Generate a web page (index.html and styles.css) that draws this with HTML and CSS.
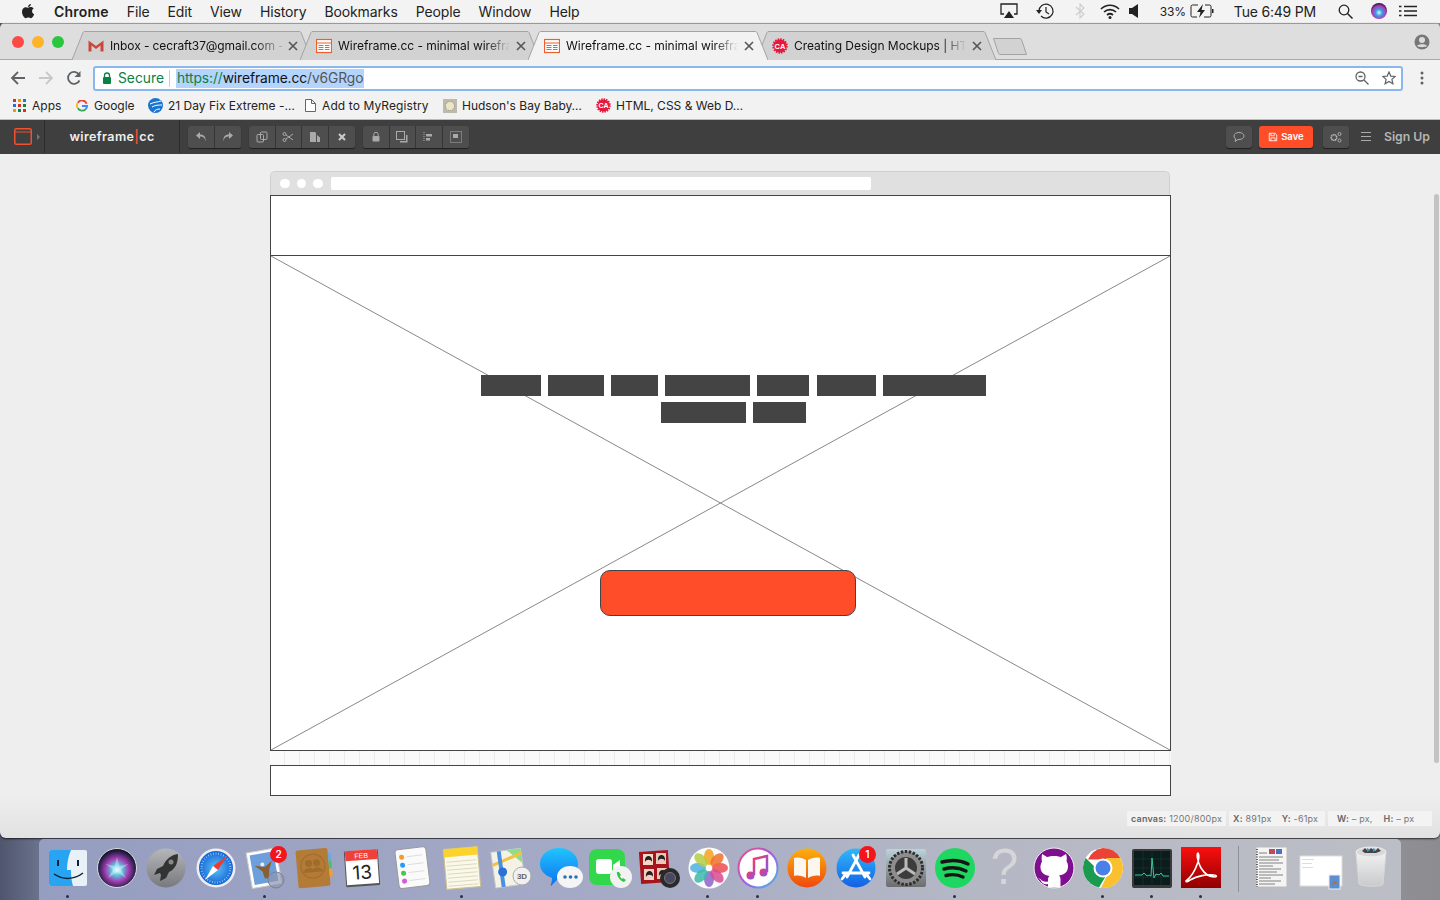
FILE: index.html
```html
<!DOCTYPE html>
<html lang="en">

<head>
    <meta charset="UTF-8">
    <title>Wireframe.cc - minimal wireframing tool</title>
    <link rel="stylesheet" href="styles.css">
</head>

<body>
    <!-- macOS menu bar -->
    <header class="menubar">
        <svg class="apple" viewBox="0 0 14 16"><path d="M10 1c0 1.500-1.300 3-2.900 3C7 2.400 8.400 1 10 1zM7.100 4.700c.7 0 1.500-.6 2.700-.6 1.100 0 2.200.5 2.900 1.500-2.400 1.400-2 4.700.5 5.700-.6 1.600-1.900 3.900-3.200 3.900-1 0-1.400-.6-2.600-.6s-1.700.6-2.600.6C3 14.900 1 11.600 1 8.800c0-2.900 1.900-4.500 3.700-4.500 1 0 1.800.4 2.400.4z" fill="#222"/></svg>
        <nav class="menu">
            <b>Chrome</b><span>File</span><span>Edit</span><span>View</span><span>History</span><span>Bookmarks</span><span>People</span><span>Window</span><span>Help</span>
        </nav>
        <div class="status">
            <svg class="st-airplay" viewBox="0 0 18 16"><path d="M4 11H1V1h16v10h-3" fill="none" stroke="#222" stroke-width="1.300"/><path d="M9 8l5 7H4z" fill="#222"/></svg>
            <svg class="st-history" viewBox="0 0 20 18"><path d="M4 9a7 7 0 1 1 2 5" fill="none" stroke="#222" stroke-width="1.200"/><path d="M1 8h6L4 12z" fill="#222"/><path d="M11 5v5l3 2" fill="none" stroke="#222" stroke-width="1.200"/></svg>
            <svg class="st-bluetooth" viewBox="0 0 10 16"><path d="M1 4l8 7-4 4V1l4 4-8 7" fill="none" stroke="#ccc" stroke-width="1.100"/></svg>
            <svg class="st-wifi" viewBox="0 0 20 15"><path d="M1 5c5-5 13-5 18 0M4 8c3.500-3.300 8.500-3.300 12 0M7 11c1.800-1.500 4.200-1.500 6 0" fill="none" stroke="#222" stroke-width="1.700"/><circle cx="10" cy="13.500" r="1.500" fill="#222"/></svg>
            <svg class="st-volume" viewBox="0 0 10 14"><path d="M0 4h3l6-4v14l-6-4H0z" fill="#222"/></svg>
            <span class="st-percent">33%</span>
            <svg class="st-battery" viewBox="0 0 24 14"><path d="M8 1H2.500A1.500 1.500 0 0 0 1 2.500v9A1.500 1.500 0 0 0 2.500 13H7M15 1h4.500A1.500 1.500 0 0 1 21 2.500v9a1.500 1.500 0 0 1-1.500 1.500H14" fill="none" stroke="#222"/><path d="M13 0L7 8h3.500L9 14l6-8h-3.500z" fill="#222"/><rect x="22" y="5" width="1.500" height="4" fill="#222"/></svg>
            <span class="st-clock">Tue 6:49 PM</span>
            <svg class="st-search" viewBox="0 0 15 15"><circle cx="6" cy="6" r="4.800" fill="none" stroke="#222" stroke-width="1.300"/><path d="M9.500 9.500l5 5" stroke="#222" stroke-width="1.500"/></svg>
            <svg class="st-siri" viewBox="0 0 16 16"><defs><radialGradient id="miniSiri" cx=".5" cy=".6" r=".6"><stop offset="0" stop-color="#cfe"/><stop offset=".35" stop-color="#3a9be8"/><stop offset=".7" stop-color="#b03ab8"/><stop offset="1" stop-color="#151528"/></radialGradient></defs><circle cx="8" cy="8" r="8" fill="url(#miniSiri)"/></svg>
            <svg class="st-list" viewBox="0 0 18 12"><path d="M5 1.500h13M5 6h13M5 10.500h13" stroke="#222" stroke-width="1.400"/><path d="M0 1.500h2.500M0 6h2.500M0 10.500h2.500" stroke="#222" stroke-width="1.600"/></svg>
        </div>
    </header>

    <div class="window">
        <!-- tabs -->
        <div class="tabstrip">
            <div class="lights"><i class="light-red"></i><i class="light-yellow"></i><i class="light-green"></i></div>

            <div class="tab">
                <svg class="tab-shape" viewBox="0 0 240 29" preserveAspectRatio="none"><path d="M0 29L11 1.500Q11.500 .5 13 .5H227Q228.500 .5 229 1.500L240 29"/></svg>
                <svg class="favicon" viewBox="0 0 16 16"><path d="M.5 2.500v11h3V7.500L8 11l4.500-3.500v6h3v-11L8 8z" fill="#c9483a"/></svg>
                <span class="tab-title tab-title-full">Inbox - cecraft37@gmail.com -</span>
                <svg class="tab-close" viewBox="0 0 10 10"><path d="M1 1l8 8M9 1l-8 8"/></svg>
            </div>

            <div class="tab">
                <svg class="tab-shape" viewBox="0 0 240 29" preserveAspectRatio="none"><path d="M0 29L11 1.500Q11.500 .5 13 .5H227Q228.500 .5 229 1.500L240 29"/></svg>
                <svg class="favicon" viewBox="0 0 16 16"><rect x=".5" y="1.500" width="15" height="13" fill="#fff" stroke="#ec5f2f" stroke-width="1.200"/><path d="M.5 5h15M2.500 7.500h5M2.500 9.500h5M2.500 11.500h5M9 7.500h4.500M9 9.500h4.500M9 11.500h4.500" stroke="#ec5f2f"/></svg>
                <span class="tab-title">Wireframe.cc - minimal wirefra</span>
                <svg class="tab-close" viewBox="0 0 10 10"><path d="M1 1l8 8M9 1l-8 8"/></svg>
            </div>

            <div class="tab tab-active">
                <svg class="tab-shape" viewBox="0 0 240 29" preserveAspectRatio="none"><path d="M0 29L11 1.500Q11.500 .5 13 .5H227Q228.500 .5 229 1.500L240 29"/></svg>
                <svg class="favicon" viewBox="0 0 16 16"><rect x=".5" y="1.500" width="15" height="13" fill="#fff" stroke="#ec5f2f" stroke-width="1.200"/><path d="M.5 5h15M2.500 7.500h5M2.500 9.500h5M2.500 11.500h5M9 7.500h4.500M9 9.500h4.500M9 11.500h4.500" stroke="#ec5f2f"/></svg>
                <span class="tab-title">Wireframe.cc - minimal wirefra</span>
                <svg class="tab-close" viewBox="0 0 10 10"><path d="M1 1l8 8M9 1l-8 8"/></svg>
            </div>

            <div class="tab">
                <svg class="tab-shape" viewBox="0 0 240 29" preserveAspectRatio="none"><path d="M0 29L11 1.500Q11.500 .5 13 .5H227Q228.500 .5 229 1.500L240 29"/></svg>
                <svg class="favicon" viewBox="0 0 16 16"><circle cx="8" cy="8" r="6.500" fill="#e8173c" stroke="#e8173c" stroke-width="2.500" stroke-dasharray="1.500 1"/><text x="8" y="10.800" class="ca-text">CA</text></svg>
                <span class="tab-title">Creating Design Mockups | HT</span>
                <svg class="tab-close" viewBox="0 0 10 10"><path d="M1 1l8 8M9 1l-8 8"/></svg>
            </div>

            <svg class="new-tab" viewBox="0 0 34 17"><path d="M.5 .5H27Q28 .5 28.500 1.500L33.500 16.500H7Q6 16.500 5.500 15.500z"/></svg>
            <svg class="profile" viewBox="0 0 16 16"><circle cx="8" cy="8" r="7.500" fill="#777"/><circle cx="8" cy="6" r="3" fill="#dcdcdc"/><path d="M3 12c1-2.500 9-2.500 10 0-1.500 1.500-8.500 1.500-10 0z" fill="#dcdcdc"/></svg>
        </div>

        <!-- address bar -->
        <div class="toolbar">
            <svg class="nav-icon" viewBox="0 0 16 16"><path d="M15 8H2M8 2L2 8l6 6" fill="none" stroke="#5f6368" stroke-width="1.800"/></svg>
            <svg class="nav-icon" viewBox="0 0 16 16"><path d="M1 8h13M8 2l6 6-6 6" fill="none" stroke="#c8c8c8" stroke-width="1.800"/></svg>
            <svg class="nav-icon" viewBox="0 0 16 16"><path d="M13.500 10.500A6 6 0 1 1 13 4.500" fill="none" stroke="#5f6368" stroke-width="1.800"/><path d="M14.500 1v6h-6z" fill="#5f6368"/></svg>
            <div class="omnibox">
                <svg class="lock" viewBox="0 0 10 12"><path d="M2.500 5.500V3.500a2.500 2.500 0 0 1 5 0v2" fill="none" stroke="#0b8043" stroke-width="1.300"/><rect x="1" y="5" width="8" height="7" rx="1" fill="#0b8043"/></svg>
                <span class="secure">Secure</span>
                <span class="url"><span class="url-scheme">https://</span>wireframe.cc<span class="url-path">/v6GRgo</span></span>
                <svg class="omni-zoom" viewBox="0 0 14 14"><circle cx="5.500" cy="5.500" r="4.500" fill="none" stroke="#5f6368" stroke-width="1.300"/><path d="M9 9l4.500 4.500M3.500 5.500h4" stroke="#5f6368" stroke-width="1.300"/></svg>
                <svg class="omni-star" viewBox="0 0 14 14"><path d="M7 1l1.800 4.100 4.400.4-3.300 2.900 1 4.400L7 10.500 3.100 12.800l1-4.400L.8 5.500l4.400-.4z" fill="none" stroke="#5f6368" stroke-width="1.200"/></svg>
            </div>
            <svg class="dots" viewBox="0 0 4 14"><circle cx="2" cy="2" r="1.500"/><circle cx="2" cy="7" r="1.500"/><circle cx="2" cy="12" r="1.500"/></svg>
        </div>

        <!-- bookmarks -->
        <div class="bookmarks">
            <a class="bm bm-apps"><svg viewBox="0 0 13 13"><path fill="#d93025" d="M0 0h3v3H0z"/><path fill="#f29900" d="M5 0h3v3H5z"/><path fill="#1a73e8" d="M10 0h3v3h-3z"/><path fill="#1a73e8" d="M0 5h3v3H0z"/><path fill="#d93025" d="M5 5h3v3H5z"/><path fill="#188038" d="M10 5h3v3h-3z"/><path fill="#f29900" d="M0 10h3v3H0z"/><path fill="#188038" d="M5 10h3v3H5z"/><path fill="#d93025" d="M10 10h3v3h-3z"/></svg>Apps</a>
            <a class="bm bm-google"><svg viewBox="0 0 13 13"><path d="M11.500 4A5.300 5.300 0 0 0 2 3" fill="none" stroke="#ea4335" stroke-width="2"/><path d="M2 3a5.300 5.300 0 0 0 0 6" fill="none" stroke="#fbbc05" stroke-width="2"/><path d="M2 9a5.300 5.300 0 0 0 8.500.8" fill="none" stroke="#34a853" stroke-width="2"/><path d="M10.500 9.800c1-1 1.500-2 1.500-3.300H6.500" fill="none" stroke="#4285f4" stroke-width="2"/></svg>Google</a>
            <a class="bm bm-fix"><svg viewBox="0 0 15 15"><circle cx="7.500" cy="7.500" r="7.500" fill="#1b75d0"/><path d="M2 6c4-2 8-2 11-3M4 9c3-2 7-2 10-2M6 14c1-2 3-3 6-3" fill="none" stroke="#fff"/></svg>21 Day Fix Extreme -…</a>
            <a class="bm bm-registry"><svg viewBox="0 0 11 13"><path d="M.5 .5h6l4 4v8H.5zM6.500 .5v4h4" fill="#fff" stroke="#666"/></svg>Add to MyRegistry</a>
            <a class="bm bm-hudson"><svg viewBox="0 0 14 14"><rect width="14" height="14" fill="#bdb9ad"/><circle cx="7" cy="7" r="4.500" fill="#ece6c6" stroke="#8d8a80" stroke-dasharray="1 1"/></svg>Hudson's Bay Baby…</a>
            <a class="bm bm-html"><svg viewBox="0 0 16 16"><circle cx="8" cy="8" r="6.500" fill="#e8173c" stroke="#e8173c" stroke-width="2.500" stroke-dasharray="1.500 1"/><text x="8" y="10.800" class="ca-text">CA</text></svg>HTML, CSS &amp; Web D…</a>
        </div>

        <!-- wireframe.cc app bar -->
        <div class="appbar">
            <div class="app-stencil">
                <svg viewBox="0 0 18 17"><rect x=".75" y=".75" width="16.500" height="15.500" rx="1.500" fill="none" stroke="#f0512e" stroke-width="1.500"/><path d="M1 4h16" stroke="#f0512e"/></svg>
                <i class="caret"></i>
            </div>
            <div class="app-logo">wireframe<em>|</em>cc</div>
            <div class="btn-group">
                <button class="tool"><svg viewBox="0 0 12 12"><path d="M5 1L1 4.500 5 8V5.500c3 0 5 1 5.500 5 .5-4.500-1.500-7-5.500-7z"/></svg></button>
                <button class="tool"><svg viewBox="0 0 12 12"><path d="M7 1l4 3.500L7 8V5.500c-3 0-5 1-5.500 5C1 6 3 3.500 7 3.500z"/></svg></button>
            </div>
            <div class="btn-group">
                <button class="tool"><svg viewBox="0 0 12 12"><rect x="1" y="3.500" width="6.500" height="7.500" rx="1" class="hollow"/><rect x="4.500" y="1" width="6.500" height="7.500" rx="1" class="hollow"/></svg></button>
                <button class="tool"><svg viewBox="0 0 12 12"><circle cx="2.500" cy="3" r="1.500" class="hollow"/><circle cx="2.500" cy="9" r="1.500" class="hollow"/><path d="M4 4l7 5M4 8l7-5" class="hollow"/></svg></button>
                <button class="tool"><svg viewBox="0 0 12 12"><path d="M1 1h5l1 1v9H1z"/><path d="M8 4l3 2.500V11H8z"/></svg></button>
                <button class="tool"><svg viewBox="0 0 12 12"><path d="M3 3l6 6M9 3l-6 6" class="thick"/></svg></button>
            </div>
            <div class="btn-group">
                <button class="tool"><svg viewBox="0 0 12 12"><path d="M3.800 5V3.500a2.200 2.200 0 0 1 4.400 0V5" class="hollow"/><rect x="2.500" y="5" width="7" height="5.500" rx="1"/></svg></button>
                <button class="tool"><svg viewBox="0 0 12 12"><rect x=".5" y=".5" width="8" height="8" class="hollow"/><path d="M10 4h1.500v7.500H4V10h6z"/></svg></button>
                <button class="tool"><svg viewBox="0 0 12 12"><path d="M1 1v10" class="hollow" stroke-dasharray="1 1"/><path d="M3 3h6v2.500H3zM3 7h4v2.500H3z"/></svg></button>
                <button class="tool"><svg viewBox="0 0 12 12"><rect x=".5" y=".5" width="11" height="11" class="hollow" stroke-dasharray="1 1"/><rect x="3" y="3" width="5" height="4"/></svg></button>
            </div>
            <div class="app-right">
                <button class="tool tool-single"><svg viewBox="0 0 12 12"><path d="M6 1.500c3 0 5 1.500 5 3.500s-2 3.500-5 3.500l-1 0-3 2 .8-2.600C1.700 7.800 1 6.500 1 5c0-2 2-3.500 5-3.500z" class="hollow"/></svg></button>
                <button class="save"><svg viewBox="0 0 12 12"><path d="M1.500 1.500h7l2 2v7h-9zM3.500 1.500v3h4v-3M3.500 10.500V7h5v3.500" fill="none" stroke="#fff"/></svg>Save</button>
                <button class="tool tool-single"><svg viewBox="0 0 12 12"><circle cx="4" cy="6.500" r="2.800" fill="none" stroke="#bbb" stroke-width="1.600" stroke-dasharray="1.400 .5"/><circle cx="9.500" cy="3" r="1.500" class="hollow"/><circle cx="9.500" cy="9.500" r="1.500" class="hollow"/></svg></button>
                <svg class="app-burger" viewBox="0 0 10 9"><path d="M0 .5h10M0 4.500h10M0 8.500h10" stroke="#aaa"/></svg>
                <a class="signup">Sign Up</a>
            </div>
        </div>

        <!-- drawing area -->
        <main class="canvas">
            <div class="stage">
                <div class="mock-bar">
                    <i></i><i></i><i></i>
                    <span class="mock-url"></span>
                </div>
                <div class="wf-box wf-header"></div>
                <div class="wf-box wf-hero">
                    <svg class="wf-cross" viewBox="0 0 899 494" preserveAspectRatio="none"><path d="M0 0L899 494M899 0L0 494"/></svg>
                    <div class="wf-text">
                        <span style="width:60px"></span><span style="width:56px"></span><span style="width:47px"></span><span style="width:85px"></span><span style="width:52px"></span><span style="width:59px"></span><span style="width:103px"></span><span style="width:85px"></span><span style="width:53px"></span>
                    </div>
                    <div class="wf-button"></div>
                </div>
                <div class="wf-grid"></div>
                <div class="wf-box wf-footer"></div>
            </div>
            <div class="scrollbar"></div>
            <div class="readout">
                <span class="chip chip-canvas"><b>canvas:</b> 1200/800px</span>
                <span class="chip chip-xy"><b>X:</b> 891px &nbsp; <b>Y:</b> -61px</span>
                <span class="chip chip-wh"><b>W:</b> – px, &nbsp;&nbsp; <b>H:</b> – px</span>
            </div>
        </main>
    </div>

    <!-- dock -->
    <footer class="dock">
        <div class="dock-item running">
            <svg viewBox="0 0 44 44"><rect x="3" y="5" width="38" height="36" rx="2" fill="#e8f1f8"/><path d="M5 5h20c-3 7-4 13-4 20h4c0 6 .5 11 2 16H5a2 2 0 0 1-2-2V7a2 2 0 0 1 2-2z" fill="#27a4f2"/><path d="M12 15v6M32 15v6" stroke="#123" stroke-width="2"/><path d="M8 29c9 6 20 6 29-1" fill="none" stroke="#123" stroke-width="1.500"/></svg>
        </div>
        <div class="dock-item">
            <svg viewBox="0 0 44 44"><defs><radialGradient id="siriGlow" cx=".5" cy=".55" r=".55"><stop offset="0" stop-color="#e6fbff"/><stop offset=".25" stop-color="#5ac8e0"/><stop offset=".55" stop-color="#a23bb0"/><stop offset=".85" stop-color="#28204a"/><stop offset="1" stop-color="#0c0c18"/></radialGradient></defs><circle cx="22" cy="23" r="19.500" fill="url(#siriGlow)" stroke="#ddd"/><path d="M22 12l2.500 9 9-2-7.500 5.500L31 33l-9-6-9 6 5-8.500L10.500 19l9 2z" fill="#fff" fill-opacity=".35"/></svg>
        </div>
        <div class="dock-item">
            <svg viewBox="0 0 44 44"><defs><linearGradient id="rocketBg" x1="0" y1="0" x2="0" y2="1"><stop offset="0" stop-color="#b5b7ba"/><stop offset="1" stop-color="#77797c"/></linearGradient></defs><circle cx="22" cy="23" r="19.500" fill="url(#rocketBg)"/><path d="M34 9c-7 1-12 5-15 12l-6 3-3 6 6-2 1 2-1 6 6-3 3-6c7-3 9-10 9-18z" fill="#333"/><circle cx="27" cy="17" r="2.500" fill="#888"/></svg>
        </div>
        <div class="dock-item">
            <svg viewBox="0 0 44 44"><defs><radialGradient id="safariBg"><stop offset="0" stop-color="#5cc4f8"/><stop offset="1" stop-color="#1565d8"/></radialGradient></defs><circle cx="22" cy="23" r="19.500" fill="#eee"/><circle cx="22" cy="23" r="17" fill="url(#safariBg)"/><circle cx="22" cy="23" r="14.500" fill="none" stroke="#cfe8fb" stroke-width="2" stroke-dasharray=".6 2"/><path d="M33 11L19 21l5 4z" fill="#f03a30"/><path d="M11 35l8-14 5 4z" fill="#fff"/></svg>
        </div>
        <div class="dock-item running">
            <svg viewBox="0 0 44 44"><g transform="rotate(-10 22 23)"><rect x="6" y="5" width="30" height="36" fill="#fff" stroke="#ccc"/><rect x="9" y="8" width="24" height="30" fill="#6d9fdc"/><path d="M12 19l10 3 8-5-4 8-2 9-4-1-1-7z" fill="#8a6030"/><circle cx="20" cy="19" r="2" fill="#eee"/></g><circle cx="33" cy="35" r="8" fill="#8f97ae" fill-opacity=".7" stroke="#7a8298"/></svg>
            <span class="badge">2</span>
        </div>
        <div class="dock-item">
            <svg viewBox="0 0 44 44"><g transform="rotate(-5 22 23)"><rect x="5" y="4" width="32" height="38" rx="2" fill="#b37b36"/><rect x="37" y="9" width="3" height="8" fill="#6aa8e0"/><rect x="37" y="17" width="3" height="8" fill="#4cc070"/><rect x="37" y="25" width="3" height="8" fill="#f0a030"/><circle cx="21" cy="21" r="12" fill="none" stroke="#a06c2c"/><circle cx="17" cy="18" r="3.500" fill="#a06c2c"/><circle cx="25" cy="18" r="3.500" fill="#a06c2c"/><path d="M11 27c1-6 11-6 12 0zM20 27c1-6 9-6 11 0z" fill="#a06c2c"/></g></svg>
        </div>
        <div class="dock-item">
            <svg viewBox="0 0 44 44"><g transform="rotate(-4 22 23)"><rect x="4" y="5" width="34" height="36" rx="1" fill="#555"/><rect x="5" y="5" width="32" height="34" fill="#fff"/><rect x="5" y="5" width="32" height="10" fill="#f0403a"/><text x="21" y="13" class="cal-month">FEB</text><text x="21" y="34" class="cal-day">13</text></g></svg>
        </div>
        <div class="dock-item">
            <svg viewBox="0 0 44 44"><g transform="rotate(-7 22 23)"><rect x="6" y="3" width="31" height="39" rx="3" fill="#fafafa" stroke="#999"/><circle cx="12" cy="11" r="2.500" fill="#f79a2a"/><circle cx="12" cy="19" r="2.500" fill="#2a9bf0"/><circle cx="12" cy="27" r="2.500" fill="#3ecb4a"/><circle cx="12" cy="35" r="2.500" fill="#d45ae0"/><path d="M17 11h16M17 19h16M17 27h16M17 35h16" stroke="#ddd"/></g></svg>
        </div>
        <div class="dock-item running">
            <svg viewBox="0 0 44 44"><g transform="rotate(-5 22 23)"><rect x="5" y="3" width="34" height="40" fill="#faf8e8" stroke="#c8c090"/><rect x="5" y="3" width="34" height="8" fill="#fbd32c"/><path d="M7 16h30M7 20h30M7 24h30M7 28h30M7 32h30M7 36h30M7 40h30" stroke="#dcd8c0"/></g></svg>
        </div>
        <div class="dock-item">
            <svg viewBox="0 0 44 44"><g transform="rotate(-8 20 22)"><rect x="4" y="5" width="30" height="36" fill="#f4f2e4" stroke="#ccc"/><path d="M20 5h14v15z" fill="#8fdc8a"/><path d="M4 18l30-8" stroke="#f4c242" stroke-width="3"/><path d="M12 5v36" stroke="#4a90e2" stroke-width="4"/><circle cx="13" cy="26" r="4.500" fill="#2b6fd8"/></g><circle cx="33" cy="31" r="9" fill="#f0f0f0" stroke="#aaa"/><text x="33" y="34" class="maps-3d">3D</text></svg>
        </div>
        <div class="dock-item">
            <svg viewBox="0 0 44 44"><defs><linearGradient id="msgBg" x1="0" y1="0" x2="0" y2="1"><stop offset="0" stop-color="#22c4fe"/><stop offset="1" stop-color="#0c72f0"/></linearGradient></defs><path d="M20 3c11 0 19 7 19 16 0 5-2 9-6 12l-13 2-8 8c-1 0 1-3 1-8C5 30 1 25 1 19 1 10 9 3 20 3z" fill="url(#msgBg)"/><ellipse cx="31" cy="32" rx="13" ry="11" fill="#f5f5f5"/><circle cx="26" cy="32" r="1.800" fill="#2a70b8"/><circle cx="31.500" cy="32" r="1.800" fill="#2a70b8"/><circle cx="37" cy="32" r="1.800" fill="#2a70b8"/></svg>
        </div>
        <div class="dock-item">
            <svg viewBox="0 0 44 44"><rect x="1" y="4" width="36" height="36" rx="8" fill="#32d74b"/><rect x="8" y="14" width="16" height="15" rx="3" fill="#fff"/><path d="M25 20l7-5v14l-7-5z" fill="#fff"/><circle cx="33" cy="32" r="11" fill="#f2f2f2"/><path d="M29 27c-1 3 3 9 7 10l2-2-3-2-1 1c-1-1-2-2-2-3l1-1-2-3z" fill="#32c74b"/></svg>
        </div>
        <div class="dock-item">
            <svg viewBox="0 0 44 44"><rect x="3" y="6" width="29" height="32" fill="#a8141c" transform="rotate(-4 17 22)"/><rect x="6" y="9" width="10" height="11" fill="#f4d8c8"/><rect x="19" y="8" width="10" height="11" fill="#e8c8b8"/><rect x="7" y="24" width="10" height="11" fill="#f0d0c0"/><rect x="20" y="23" width="10" height="11" fill="#ecc8b8"/><path d="M8 17c-1-8 8-8 7 0-1-3-6-3-7 0zM21 16c-1-8 8-8 7 0-1-3-6-3-7 0zM9 32c-1-8 8-8 7 0-1-3-6-3-7 0zM22 31c-1-8 8-8 7 0-1-3-6-3-7 0z" fill="#222"/><circle cx="33" cy="33" r="10" fill="#2a2a2c"/><circle cx="33" cy="33" r="5.500" fill="#484860" stroke="#777"/></svg>
        </div>
        <div class="dock-item running">
            <svg viewBox="0 0 44 44"><circle cx="22" cy="23" r="20.500" fill="#fbfbfb"/><g fill-opacity=".85"><ellipse cx="22" cy="12" rx="5" ry="8" fill="#f6a21c"/><ellipse cx="22" cy="34" rx="5" ry="8" fill="#8b63c8"/><ellipse cx="11" cy="23" rx="8" ry="5" fill="#4cb0e0"/><ellipse cx="33" cy="23" rx="8" ry="5" fill="#ee4a52"/><ellipse cx="14" cy="15" rx="5" ry="8" fill="#b4cc44" transform="rotate(-45 14 15)"/><ellipse cx="30" cy="15" rx="5" ry="8" fill="#f0702c" transform="rotate(45 30 15)"/><ellipse cx="14" cy="31" rx="5" ry="8" fill="#3cb8a8" transform="rotate(45 14 31)"/><ellipse cx="30" cy="31" rx="5" ry="8" fill="#d84a90" transform="rotate(-45 30 31)"/></g></svg>
        </div>
        <div class="dock-item running">
            <svg viewBox="0 0 44 44"><defs><linearGradient id="tunesRing" x1="0" y1="0" x2="1" y2="1"><stop offset="0" stop-color="#f04a80"/><stop offset=".5" stop-color="#a85ae0"/><stop offset="1" stop-color="#3ac0f0"/></linearGradient><linearGradient id="tunesNote" x1="0" y1="0" x2="1" y2="1"><stop offset="0" stop-color="#fa3a60"/><stop offset="1" stop-color="#7a5af0"/></linearGradient></defs><circle cx="22" cy="23" r="19.500" fill="#fff" stroke="url(#tunesRing)" stroke-width="2"/><path d="M18 30V14l13-3v16" fill="none" stroke="url(#tunesNote)" stroke-width="2.500"/><circle cx="14.500" cy="30.500" r="4" fill="url(#tunesNote)"/><circle cx="27.500" cy="27.500" r="4" fill="url(#tunesNote)"/></svg>
        </div>
        <div class="dock-item">
            <svg viewBox="0 0 44 44"><defs><linearGradient id="booksBg" x1="0" y1="0" x2="0" y2="1"><stop offset="0" stop-color="#fbb00c"/><stop offset="1" stop-color="#f0480e"/></linearGradient></defs><circle cx="22" cy="23" r="19.500" fill="url(#booksBg)"/><path d="M21 15c-3-2-8-3-12-2v18c4-1 9 0 12 2zM23 15c3-2 8-3 12-2v18c-4-1-9 0-12 2z" fill="#fbf6ee"/></svg>
        </div>
        <div class="dock-item">
            <svg viewBox="0 0 44 44"><defs><linearGradient id="storeBg" x1="0" y1="0" x2="0" y2="1"><stop offset="0" stop-color="#30b8fa"/><stop offset="1" stop-color="#1260e4"/></linearGradient></defs><circle cx="22" cy="23" r="19.500" fill="url(#storeBg)"/><path d="M25 10L13 32M19 10l12 22M9 28h26M8 34l3-4M36 34l-3-4" stroke="#fff" stroke-width="2.800" stroke-linecap="round" fill="none"/></svg>
            <span class="badge badge-store">1</span>
        </div>
        <div class="dock-item">
            <svg viewBox="0 0 44 44"><defs><linearGradient id="prefsBg" x1="0" y1="0" x2="0" y2="1"><stop offset="0" stop-color="#bcd4da"/><stop offset="1" stop-color="#6c6c6c"/></linearGradient></defs><rect x="2" y="4" width="40" height="38" rx="2" fill="url(#prefsBg)"/><circle cx="22" cy="23" r="16.500" fill="#8d8d8d" stroke="#2e2e2e" stroke-width="3" stroke-dasharray="2.500 1.500"/><circle cx="22" cy="23" r="11" fill="#3c3c3c"/><path d="M22 23V13M22 23l-9 6M22 23l9 6" stroke="#bbb" stroke-width="3"/></svg>
        </div>
        <div class="dock-item running">
            <svg viewBox="0 0 44 44"><circle cx="22" cy="23" r="20" fill="#1ed760"/><path d="M9 17c9-2.500 18-2 26 2M11 24c7.500-2 15-1.500 22 2M13 30.500c6-1.500 12-1 17 1.500" fill="none" stroke="#151515" stroke-width="3.400" stroke-linecap="round"/></svg>
        </div>
        <div class="dock-item dock-question">?</div>
        <div class="dock-item">
            <svg viewBox="0 0 44 44"><circle cx="22" cy="23" r="20" fill="#7f0f90" stroke="#eee"/><path d="M10 9l5 3c4-1.500 10-1.500 14 0l5-3c1 3 1 5 .5 7 2 3 2 7 .5 10-2 3-5 4-8 4.500 1 1 1.500 2.500 1.500 4V42.500H16V39c-4 1-6-1-7-3s-2-2-3-2.500c2-.5 3 1 4 2s3 1.500 6 1v-2c0-1.500.5-2.500 1.500-3.500-3-.5-6-1.500-8-4.500-1.500-3-1.500-7 .5-10-.5-2-.5-4 0-7z" fill="#fff"/></svg>
        </div>
        <div class="dock-item running">
            <svg viewBox="0 0 44 44"><circle cx="22" cy="23" r="20" fill="#fff"/><path d="M22 3a20 20 0 0 1 17.300 10L22 14.500H7a20 20 0 0 1 15-11.500z" fill="#ea4335"/><path d="M4.700 13A20 20 0 0 0 18 42.600l8-13.600-10-5z" fill="#1a9b50"/><path d="M39.300 13H25l5 9-10 21a20 20 0 0 0 19.300-30z" fill="#fbc02d"/><circle cx="22" cy="23" r="9.500" fill="#fff"/><circle cx="22" cy="23" r="7.500" fill="#4a80e8"/></svg>
        </div>
        <div class="dock-item running">
            <svg viewBox="0 0 44 44"><rect x="2" y="4" width="40" height="39" rx="2" fill="#3a3a3a"/><rect x="4" y="6" width="36" height="34" fill="#0b1c1c"/><path d="M4 14h36M4 23h36M4 32h36M13 6v34M22 6v34M31 6v34" stroke="#1f3a36" stroke-width=".6"/><path d="M5 30h7l2-2 3 3 2-1 2 1 1-18 2 20 2-4 3 1 2-2 2 3h6" fill="none" stroke="#36c8a0"/></svg>
        </div>
        <div class="dock-item running">
            <svg viewBox="0 0 44 44"><defs><linearGradient id="pdfBg" x1="0" y1="0" x2="0" y2="1"><stop offset="0" stop-color="#fb0f0f"/><stop offset="1" stop-color="#8e0000"/></linearGradient></defs><rect x="2" y="2" width="40" height="41" fill="url(#pdfBg)"/><path d="M7 36c4-3 9-10 12-19 1-4 1-8 0-9-1.500 0-1 8 3 15 3 5 8 9 14 9 2 0 2-2-1-2-7-1-17 1-24 5-3 2-4 2-4 1z" fill="none" stroke="#fff" stroke-width="1.600"/></svg>
        </div>
        <div class="dock-sep"></div>
        <div class="dock-item dock-stack">
            <svg viewBox="0 0 44 44"><rect x="7" y="2" width="31" height="40" fill="#f4f4f4" stroke="#bbb"/><rect x="20" y="4" width="6" height="5" fill="#c2485a"/><rect x="27" y="4" width="6" height="5" fill="#4a70c2"/><path d="M10 8h8M10 12h24M10 15h20M10 18h24M10 21h14M10 24h22M10 27h18M10 30h24M10 33h12M10 36h22M10 39h16" stroke="#666" stroke-width=".8"/><path d="M8 4v38" stroke="#333" stroke-width="1.500" stroke-dasharray="1 1.500"/></svg>
        </div>
        <div class="dock-item dock-stack">
            <svg viewBox="0 0 44 44"><rect x="1" y="11" width="42" height="30" fill="#fff" stroke="#ddd"/><path d="M3 14h12v1H3zM3 18h10v1H3zM3 22h11v1H3z" fill="#ddd"/><rect x="30" y="30" width="11" height="14" fill="#5d8fd0" stroke="#eee"/><path d="M32 40l3-4 4 2" fill="#a87838"/></svg>
        </div>
        <div class="dock-item dock-stack">
            <svg viewBox="0 0 44 44"><defs><linearGradient id="binBg" x1="0" y1="0" x2="0" y2="1"><stop offset="0" stop-color="#f0f0f0"/><stop offset="1" stop-color="#c8cacc"/></linearGradient></defs><path d="M7 8h30l-3 31c-.5 3-21 3-24 0z" fill="url(#binBg)" stroke="#d8d8d8"/><ellipse cx="22" cy="7" rx="15" ry="5" fill="#d8d8da" stroke="#eee"/><path d="M13 6l3-3 3 3 3-3 4 3 3-3 3 3-5 2H16z" fill="#444"/><path d="M18 3l3 2-3 2zM24 3l3 2-3 2z" fill="#2a9bd0"/></svg>
        </div>
    </footer>
</body>

</html>
```

FILE: styles.css
```css
* {
    box-sizing: border-box;
}

html,
body {
    margin: 0;
    height: 100%;
    overflow: hidden;
}

body {
    display: flex;
    flex-direction: column;
    width: 1440px;
    height: 900px;
    font-family: Inter, "Liberation Sans", sans-serif;
    color: #222;
    background: linear-gradient(90deg, #4f556c 0%, #6d7590 3%, #8f8f95 97%, #8b8b90 100%);
}

svg {
    display: block;
    flex: none;
}

/* menu bar */

.menubar {
    display: flex;
    align-items: center;
    height: 23px;
    flex: none;
    padding-bottom: 1px;
    background: #f3f3f3;
    font-size: 14px;
}

.apple {
    width: 14px;
    height: 16px;
    margin-left: 21px;
}

.menu {
    display: flex;
    gap: 18px;
    margin-left: 19px;
    letter-spacing: -.12px;
}

.menu b {
    font-weight: 600;
    letter-spacing: .2px;
}

.status {
    display: flex;
    align-items: center;
    margin-left: auto;
    font-size: 14px;
    letter-spacing: -.2px;
}

.st-airplay { width: 18px; height: 16px; }
.st-history { width: 20px; height: 18px; margin-left: 17px; }
.st-bluetooth { width: 10px; height: 16px; margin-left: 20px; }
.st-wifi { width: 20px; height: 15px; margin-left: 15px; }
.st-volume { width: 10px; height: 14px; margin-left: 9px; }
.st-percent { margin-left: 21px; font-size: 12px; }
.st-battery { width: 24px; height: 14px; margin-left: 4px; }
.st-clock { margin-left: 20px; }
.st-search { width: 15px; height: 15px; margin-left: 22px; }
.st-siri { width: 16px; height: 16px; margin-left: 18px; }
.st-list { width: 18px; height: 12px; margin-left: 12px; margin-right: 23px; }

/* browser window */

.window {
    display: flex;
    flex-direction: column;
    height: 815px;
    flex: none;
    border-radius: 5px 5px 6px 6px;
    overflow: hidden;
    box-shadow: 0 1px 2px rgba(0, 0, 0, .7);
}

.tabstrip {
    display: flex;
    align-items: center;
    height: 37px;
    flex: none;
    background: #dedede;
    border-top: 1px solid #999;
    border-bottom: 1px solid #a9a9a9;
}

.lights {
    display: flex;
    gap: 8px;
    width: 72px;
    padding-left: 12px;
    padding-top: 1px;
}

.lights i {
    width: 12px;
    height: 12px;
    border-radius: 50%;
}

.light-red { background: #fc4b45; }
.light-yellow { background: #fdb32a; }
.light-green { background: #29c73f; }

.tab {
    position: relative;
    display: flex;
    align-items: center;
    align-self: flex-end;
    gap: 6px;
    width: 240px;
    height: 29px;
    margin-right: -12px;
    margin-bottom: -1px;
    padding: 0 14px 0 16px;
    font-size: 12px;
    color: #111;
}

.tab-shape {
    position: absolute;
    left: 0;
    top: 0;
    width: 100%;
    height: 100%;
}

.tab-shape path {
    fill: #d2d2d2;
    stroke: #a3a3a3;
}

.tab-active {
    z-index: 2;
}

.tab-active .tab-shape path {
    fill: #f2f2f2;
}

.favicon {
    position: relative;
    width: 16px;
    height: 16px;
}

.ca-text {
    font-family: "Liberation Sans", sans-serif;
    font-size: 7.500px;
    font-weight: 700;
    fill: #fff;
    text-anchor: middle;
}

.tab-title {
    position: relative;
    flex: 1;
    min-width: 0;
    white-space: nowrap;
    letter-spacing: -.03px;
    -webkit-mask-image: linear-gradient(90deg, #000 86%, transparent 100%);
    mask-image: linear-gradient(90deg, #000 86%, transparent 100%);
}

.tab-title-full {
    letter-spacing: -.1px;
    -webkit-mask-image: linear-gradient(90deg, #000 84%, rgba(0, 0, 0, .2) 98%);
    mask-image: linear-gradient(90deg, #000 84%, rgba(0, 0, 0, .2) 98%);
}

.tab-close {
    position: relative;
    width: 10px;
    height: 10px;
    fill: none;
    stroke: #555;
    stroke-width: 1.600;
}

.new-tab {
    width: 34px;
    height: 17px;
    margin-left: 9px;
    margin-top: 10px;
    fill: #d2d2d2;
    stroke: #a3a3a3;
}

.profile {
    width: 16px;
    height: 16px;
    margin-left: auto;
    margin-right: 10px;
}

/* address bar */

.toolbar {
    display: flex;
    align-items: center;
    gap: 12px;
    height: 34px;
    flex: none;
    padding: 2px 0 0 10px;
    background: #f2f2f2;
}

.nav-icon {
    width: 16px;
    height: 16px;
}

.omnibox {
    display: flex;
    align-items: center;
    width: 1310px;
    height: 25px;
    margin-left: -1px;
    padding: 0 5px 0 7px;
    background: #fff;
    border: 2px solid #8ab8ee;
    border-radius: 3px;
    font-size: 13.800px;
}

.lock {
    width: 10px;
    height: 12px;
}

.secure {
    margin-left: 6px;
    padding-right: 5px;
    border-right: 1px solid #ccc;
    line-height: 17px;
    color: #0b8043;
}

.url {
    margin-left: 6px;
    padding: 0 1px;
    background: #b3d4fd;
    line-height: 19px;
    color: #111;
    letter-spacing: -.1px;
}

.url-scheme {
    color: #0b8043;
}

.url-path {
    color: #555;
}

.omni-zoom {
    width: 14px;
    height: 14px;
    margin-left: auto;
}

.omni-star {
    width: 14px;
    height: 14px;
    margin-left: 13px;
}

.dots {
    width: 4px;
    height: 14px;
    margin-left: 5px;
    fill: #5f6368;
}

/* bookmarks */

.bookmarks {
    display: flex;
    align-items: center;
    height: 26px;
    flex: none;
    padding: 0 0 2px 13px;
    background: #f2f2f2;
    border-bottom: 1px solid #bbb;
    font-size: 12px;
}

.bm {
    display: flex;
    align-items: center;
    gap: 6px;
}

.bm svg {
    width: 14px;
    height: 14px;
}

.bm-apps { width: 63px; }
.bm-apps svg { width: 13px; height: 13px; }
.bm-google { width: 72px; }
.bm-google svg { width: 12px; height: 12px; }
.bm-fix { width: 157px; gap: 5px; }
.bm-fix svg { width: 15px; height: 15px; }
.bm-registry { width: 138px; letter-spacing: .1px; }
.bm-registry svg { width: 11px; height: 13px; }
.bm-hudson { width: 153px; gap: 5px; }
.bm-html { gap: 5px; }
.bm-html svg { width: 15px; height: 15px; }

/* app bar */

.appbar {
    display: flex;
    align-items: center;
    height: 34px;
    flex: none;
    padding-bottom: 1px;
    background: #3f3f3f;
}

.app-stencil {
    display: flex;
    align-items: center;
    gap: 5px;
    width: 45px;
    height: 100%;
    padding-left: 14px;
    border-right: 1px solid #2c2c2c;
}

.app-stencil svg {
    width: 18px;
    height: 17px;
}

.caret {
    border-left: 3px solid #777;
    border-top: 3px solid transparent;
    border-bottom: 3px solid transparent;
}

.app-logo {
    display: flex;
    align-items: center;
    justify-content: center;
    width: 135px;
    height: 100%;
    border-right: 1px solid #2c2c2c;
    font-size: 12.500px;
    font-weight: 600;
    letter-spacing: .4px;
    color: #eee;
}

.app-logo em {
    font-style: normal;
    color: #f0512e;
}

.btn-group {
    display: flex;
    margin-left: 8px;
    border-radius: 3px;
    overflow: hidden;
    box-shadow: 0 1px 1px rgba(0, 0, 0, .5);
}

.tool {
    display: flex;
    align-items: center;
    justify-content: center;
    width: 26.500px;
    height: 22px;
    padding: 0;
    background: #4e4e4e;
    border: 0;
    border-right: 1px solid #363636;
}

.tool:last-child {
    border-right: 0;
}

.tool svg {
    width: 12px;
    height: 12px;
    fill: #aaa;
}

.hollow {
    fill: none;
    stroke: #aaa;
}

.thick {
    fill: none;
    stroke: #ccc;
    stroke-width: 2;
}

.app-right {
    display: flex;
    align-items: center;
    margin-left: auto;
}

.tool-single {
    width: 26px;
    border-right: 0;
    border-radius: 3px;
    box-shadow: 0 1px 1px rgba(0, 0, 0, .5);
}

.save {
    display: flex;
    align-items: center;
    justify-content: center;
    gap: 3px;
    width: 54px;
    height: 22px;
    margin: 0 10px 0 7px;
    padding: 0;
    background: #ff4d29;
    border: 0;
    border-radius: 3px;
    box-shadow: 0 1px 1px rgba(0, 0, 0, .5);
    font-family: inherit;
    font-size: 9.500px;
    font-weight: 600;
    color: #fff;
}

.save svg {
    width: 10px;
    height: 10px;
}

.app-burger {
    width: 10px;
    height: 9px;
    margin-left: 12px;
}

.signup {
    margin: 0 10px 0 13px;
    font-size: 12.250px;
    font-weight: 600;
    color: #b5b5b5;
}

/* drawing area */

.canvas {
    position: relative;
    flex: 1;
    padding: 17px 0 0 270px;
    background: linear-gradient(180deg, #eee 0, #eee 640px, #e2e2e2 100%);
}

.stage {
    width: 901px;
}

.mock-bar {
    display: flex;
    align-items: center;
    gap: 7px;
    width: 900px;
    height: 24px;
    padding: 0 0 0 9px;
    background: #e0e0e0;
    border: 1px solid #d0d0d0;
    border-bottom: 0;
    border-radius: 5px 5px 0 0;
}

.mock-bar i {
    width: 9.500px;
    height: 9.500px;
    border-radius: 50%;
    background: #fff;
}

.mock-url {
    width: 540px;
    height: 13px;
    margin-left: 1.500px;
    background: #fff;
    border-radius: 2px;
}

.wf-box {
    background: #fff;
    border: 1px solid #444;
}

.wf-header {
    height: 61px;
}

.wf-hero {
    position: relative;
    height: 496px;
    margin-top: -1px;
}

.wf-cross {
    width: 100%;
    height: 100%;
    fill: none;
    stroke: #888;
}

.wf-text {
    position: absolute;
    left: 210px;
    top: 119px;
    display: flex;
    flex-wrap: wrap;
    justify-content: center;
    gap: 6px 7px;
    width: 505px;
}

.wf-text span {
    height: 21px;
    background: #444;
}

.wf-text span:nth-child(5) {
    margin-right: 1px;
}

.wf-button {
    position: absolute;
    left: 329px;
    top: 314px;
    width: 256px;
    height: 46px;
    background: #ff4d29;
    border: 1px solid #444;
    border-radius: 10px;
}

.wf-grid {
    height: 14px;
    background: #fafafa repeating-linear-gradient(90deg, transparent 0 14px, #ebebeb 14px 15px);
}

.wf-footer {
    height: 31px;
}

.scrollbar {
    position: absolute;
    right: 1px;
    top: 40px;
    width: 5px;
    height: 569px;
    background: #c3c3c3;
    border-radius: 3px;
}

.readout {
    position: absolute;
    right: 8px;
    bottom: 12px;
    display: flex;
    gap: 3px;
    font-size: 9px;
    letter-spacing: .2px;
    color: #777;
}

.chip {
    height: 15px;
    padding-left: 4px;
    background: #f3f3f3;
    line-height: 15px;
    white-space: nowrap;
}

.chip b {
    font-weight: 600;
    color: #666;
}

.chip-xy b + b {
    margin-left: 2px;
}

.chip-canvas { width: 99px; }
.chip-xy { width: 96px; }
.chip-wh { width: 104px; padding-left: 9px; }

/* dock */

.dock {
    display: flex;
    width: 1362px;
    height: 61px;
    margin: 1px 0 0 39px;
    padding: 5px 0 0 4px;
    background: linear-gradient(90deg, #959dc0 0%, #a4aac6 40%, #b5b8c4 70%, #bcbec6 100%);
    border-radius: 5px 5px 0 0;
}

.dock-item {
    position: relative;
    flex: none;
    width: 49.300px;
    height: 55px;
    padding-left: 2.650px;
}

.dock-item svg {
    width: 44px;
    height: 46px;
}

.dock-item.running::after {
    content: "";
    position: absolute;
    left: 22.500px;
    bottom: 1px;
    width: 3px;
    height: 3px;
    border-radius: 50%;
    background: #2a2f40;
}

.badge {
    position: absolute;
    top: 2px;
    left: 30px;
    width: 17px;
    height: 17px;
    border-radius: 50%;
    background: #f3141c;
    font-size: 10px;
    font-weight: 600;
    line-height: 17px;
    text-align: center;
    color: #fff;
}

.badge-store {
    left: 27px;
}

.cal-month {
    font-family: "Liberation Sans", sans-serif;
    font-size: 7px;
    fill: #fff;
    text-anchor: middle;
}

.cal-day {
    font-family: Inter, sans-serif;
    font-size: 19px;
    fill: #222;
    text-anchor: middle;
}

.maps-3d {
    font-family: "Liberation Sans", sans-serif;
    font-size: 8px;
    font-weight: 700;
    fill: #666;
    text-anchor: middle;
}

.dock-question {
    padding: 0;
    font-family: "Liberation Sans", sans-serif;
    font-size: 50px;
    line-height: 46px;
    text-align: center;
    color: #d4d6da;
}

.dock-sep {
    flex: none;
    width: 1px;
    height: 46px;
    margin: 2px 7px 0 12px;
    background: #8d8f98;
}

.dock-stack {
    width: 50px;
}
```
